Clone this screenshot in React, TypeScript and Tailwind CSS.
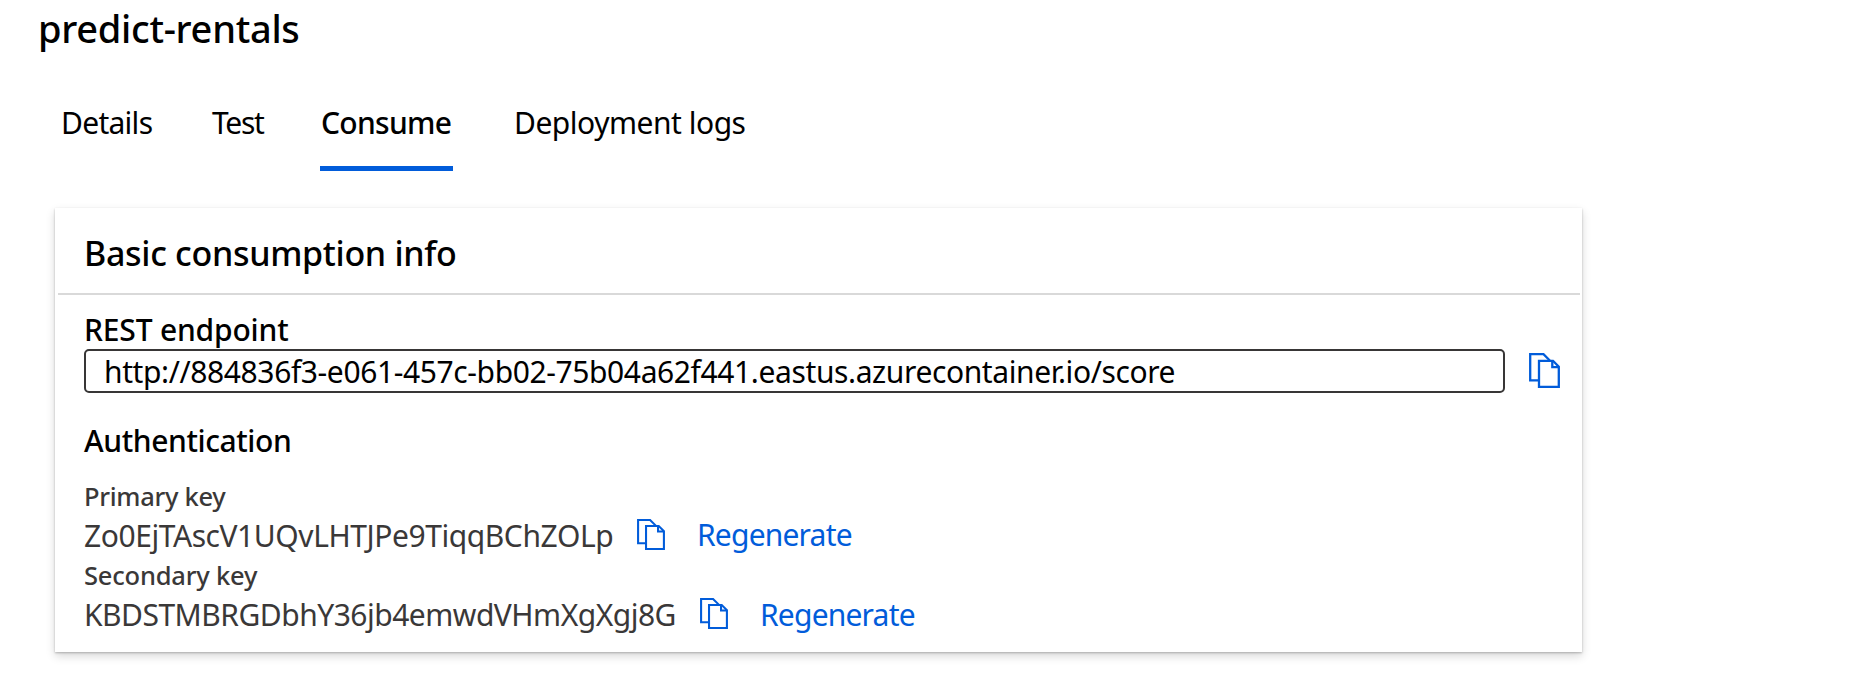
function CopyIcon({ className }: { className: string }) {
  return (
    <svg
      viewBox="0 0 31 35"
      className={className}
      fill="none"
      stroke="#015cda"
      strokeWidth="2.3"
      preserveAspectRatio="none"
      aria-hidden="true"
    >
      <path d="M10 27.3H1.2V1.2H14.5L20.8 7.5" />
      <path d="M10 7.8H24L29.8 13.8V33.8H10Z" />
      <path d="M23.3 7.8V14.2H30" />
    </svg>
  );
}

export default function App() {
  return (
    <div className="h-[699px] w-[1858px] overflow-hidden bg-white pt-[3px] font-['Noto_Sans',sans-serif] text-black">
      <h1 className="ml-[38px] text-[38px] leading-[50px] font-medium tracking-[-0.29px] whitespace-nowrap">
        predict-rentals
      </h1>

      <nav className="mt-[49px] flex h-[69px] text-[30px] leading-[42px] whitespace-nowrap">
        <a className="ml-[61px] w-[151px] tracking-[-0.72px]">Details</a>
        <a className="w-[108px] tracking-[-1.3px]">Test</a>
        <a className="w-[133px] border-b-[5px] border-[#015cda] pl-px font-medium tracking-[-0.72px]">Consume</a>
        <a className="ml-[61px] tracking-[-0.48px]">Deployment logs</a>
      </nav>

      <section className="mt-[37px] ml-[55px] h-[444px] w-[1527px] bg-white whitespace-nowrap shadow-[0_4px_9px_rgba(0,0,0,0.16),0_1px_2px_rgba(0,0,0,0.24)]">
        <h2 className="h-[85px] pt-[3px] pl-[29px] text-[34px] leading-[85px] font-medium tracking-[-0.31px]">
          Basic consumption info
        </h2>
        <hr className="mr-[2px] ml-[3px] h-[2px] border-0 bg-[#d9d9d9]" />

        <div className="pt-[14px] pl-[29px] text-[30px] leading-[42px]">
          <h3 className="h-[40px] font-medium tracking-[-0.18px]">REST endpoint</h3>
          <div className="flex h-[44px] items-start">
            <div className="h-[44px] w-[1421px] rounded-[5px] border-2 border-[#383636] pl-[18px] tracking-[-0.39px]">
              http://884836f3-e061-457c-bb02-75b04a62f441.eastus.azurecontainer.io/score
            </div>
            <CopyIcon className="mt-[4px] ml-[24px] h-[35px] w-[31px]" />
          </div>

          <h3 className="mt-[27px] h-[40px] font-medium tracking-[-0.4px]">Authentication</h3>

          <div className="mt-[19px] text-[25.5px] leading-[34px] font-medium tracking-[-0.3px] text-[#3a3838]">
            Primary key
          </div>
          <div className="mt-[2px] flex h-[40px]">
            <span className="w-[553px] tracking-[-0.43px] text-[#3a3838]">Zo0EjTAscV1UQvLHTJPe9TiqqBChZOLp</span>
            <CopyIcon className="mt-[4px] h-[31px] w-[28px]" />
            <a className="-mt-px ml-[32px] tracking-[-0.8px] text-[#015cda]">Regenerate</a>
          </div>

          <div className="mt-[3px] text-[25.5px] leading-[34px] font-medium tracking-[-0.2px] text-[#3a3838]">
            Secondary key
          </div>
          <div className="mt-[2px] flex h-[40px]">
            <span className="w-[616px] tracking-[-0.5px] text-[#3a3838]">KBDSTMBRGDbhY36jb4emwdVHmXgXgj8G</span>
            <CopyIcon className="mt-[4px] h-[31px] w-[28px]" />
            <a className="ml-[32px] tracking-[-0.8px] text-[#015cda]">Regenerate</a>
          </div>
        </div>
      </section>
    </div>
  );
}
